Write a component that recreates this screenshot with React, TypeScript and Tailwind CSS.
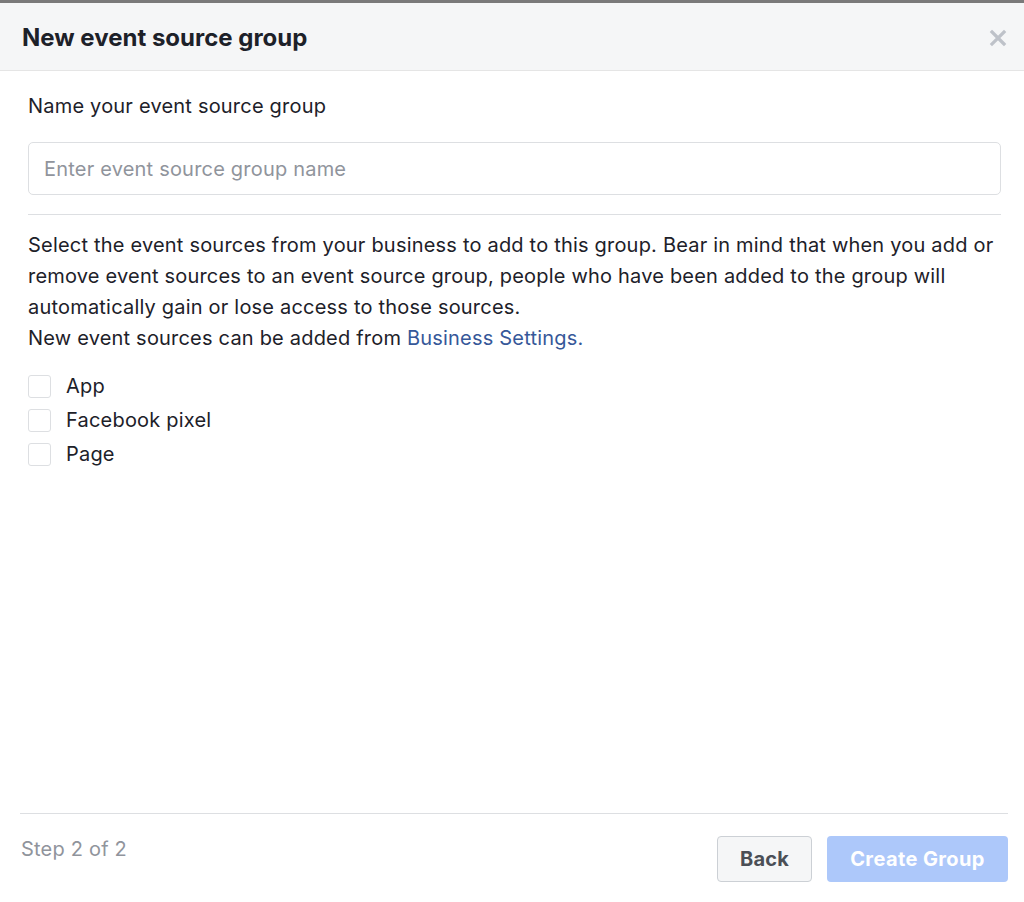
import { useState } from 'react';

const sources = ['App', 'Facebook pixel', 'Page'];

export default function App() {
  const [checked, setChecked] = useState<Record<string, boolean>>({});

  return (
    <div
      className="w-[1024px] h-[902px] bg-white flex flex-col border-t-[3px] border-[#7a7a7a] text-[#1d2129] tracking-[0.2px]"
      style={{ fontFamily: 'Inter, "Noto Sans", sans-serif' }}
    >
      {/* Header */}
      <div className="h-[68px] shrink-0 bg-[#f5f6f7] border-b border-[#e5e5e5] flex items-center justify-between pl-[22px] pr-[17px] pt-[3px]">
        <h1 className="text-[24px] font-bold text-[#1d2129] tracking-normal">New event source group</h1>
        <button className="text-[#bec2c9]">
          <svg width="18" height="18" viewBox="0 0 18 18">
            <path d="M3 3 L15 15 M15 3 L3 15" stroke="currentColor" strokeWidth="3.2" strokeLinecap="square" />
          </svg>
        </button>
      </div>

      {/* Body */}
      <div className="flex-1 pl-[28px] pr-[23px] pt-[20px]">
        <div className="text-[20px] leading-[30px]">Name your event source group</div>
        <input
          className="mt-[21px] w-full h-[53px] rounded-[5px] border border-[#dddfe2] px-[15px] text-[20px] outline-none placeholder:text-[#90949c]"
          placeholder="Enter event source group name"
        />
        <div className="mt-[19px] h-px bg-[#dddfe2]" />
        <p className="mt-[15px] text-[20px] leading-[31px]">
          Select the event sources from your business to add to this group. Bear in mind that when you add or
          remove event sources to an event source group, people who have been added to the group will
          automatically gain or lose access to those sources.
          <br />
          New event sources can be added from <a className="text-[#365899]">Business Settings.</a>
        </p>
        <div className="mt-[21px] flex flex-col gap-[12px]">
          {sources.map((s) => (
            <label key={s} className="flex items-center gap-[15px] h-[22px] cursor-pointer">
              <span
                onClick={() => setChecked({ ...checked, [s]: !checked[s] })}
                className="w-[23px] h-[23px] rounded-[3px] border border-[#dddfe2] bg-white"
              />
              <span className="text-[20px]">{s}</span>
            </label>
          ))}
        </div>
      </div>

      {/* Footer */}
      <div className="shrink-0 ml-[20px] mr-[16px] border-t border-[#dddfe2] h-[89px] flex items-start justify-between pt-[22px]">
        <span className="text-[20px] text-[#90949c] mt-[-2px] ml-[1px]">Step 2 of 2</span>
        <div className="flex gap-[15px]">
          <button className="h-[46px] w-[95px] rounded-[4px] border border-[#ccd0d5] bg-[#f5f6f7] text-[20px] font-bold text-[#4b4f56]">
            Back
          </button>
          <button className="h-[46px] w-[181px] rounded-[4px] bg-[#adc8fa] text-[20px] font-bold text-white tracking-[0.4px]">
            Create Group
          </button>
        </div>
      </div>
    </div>
  );
}
